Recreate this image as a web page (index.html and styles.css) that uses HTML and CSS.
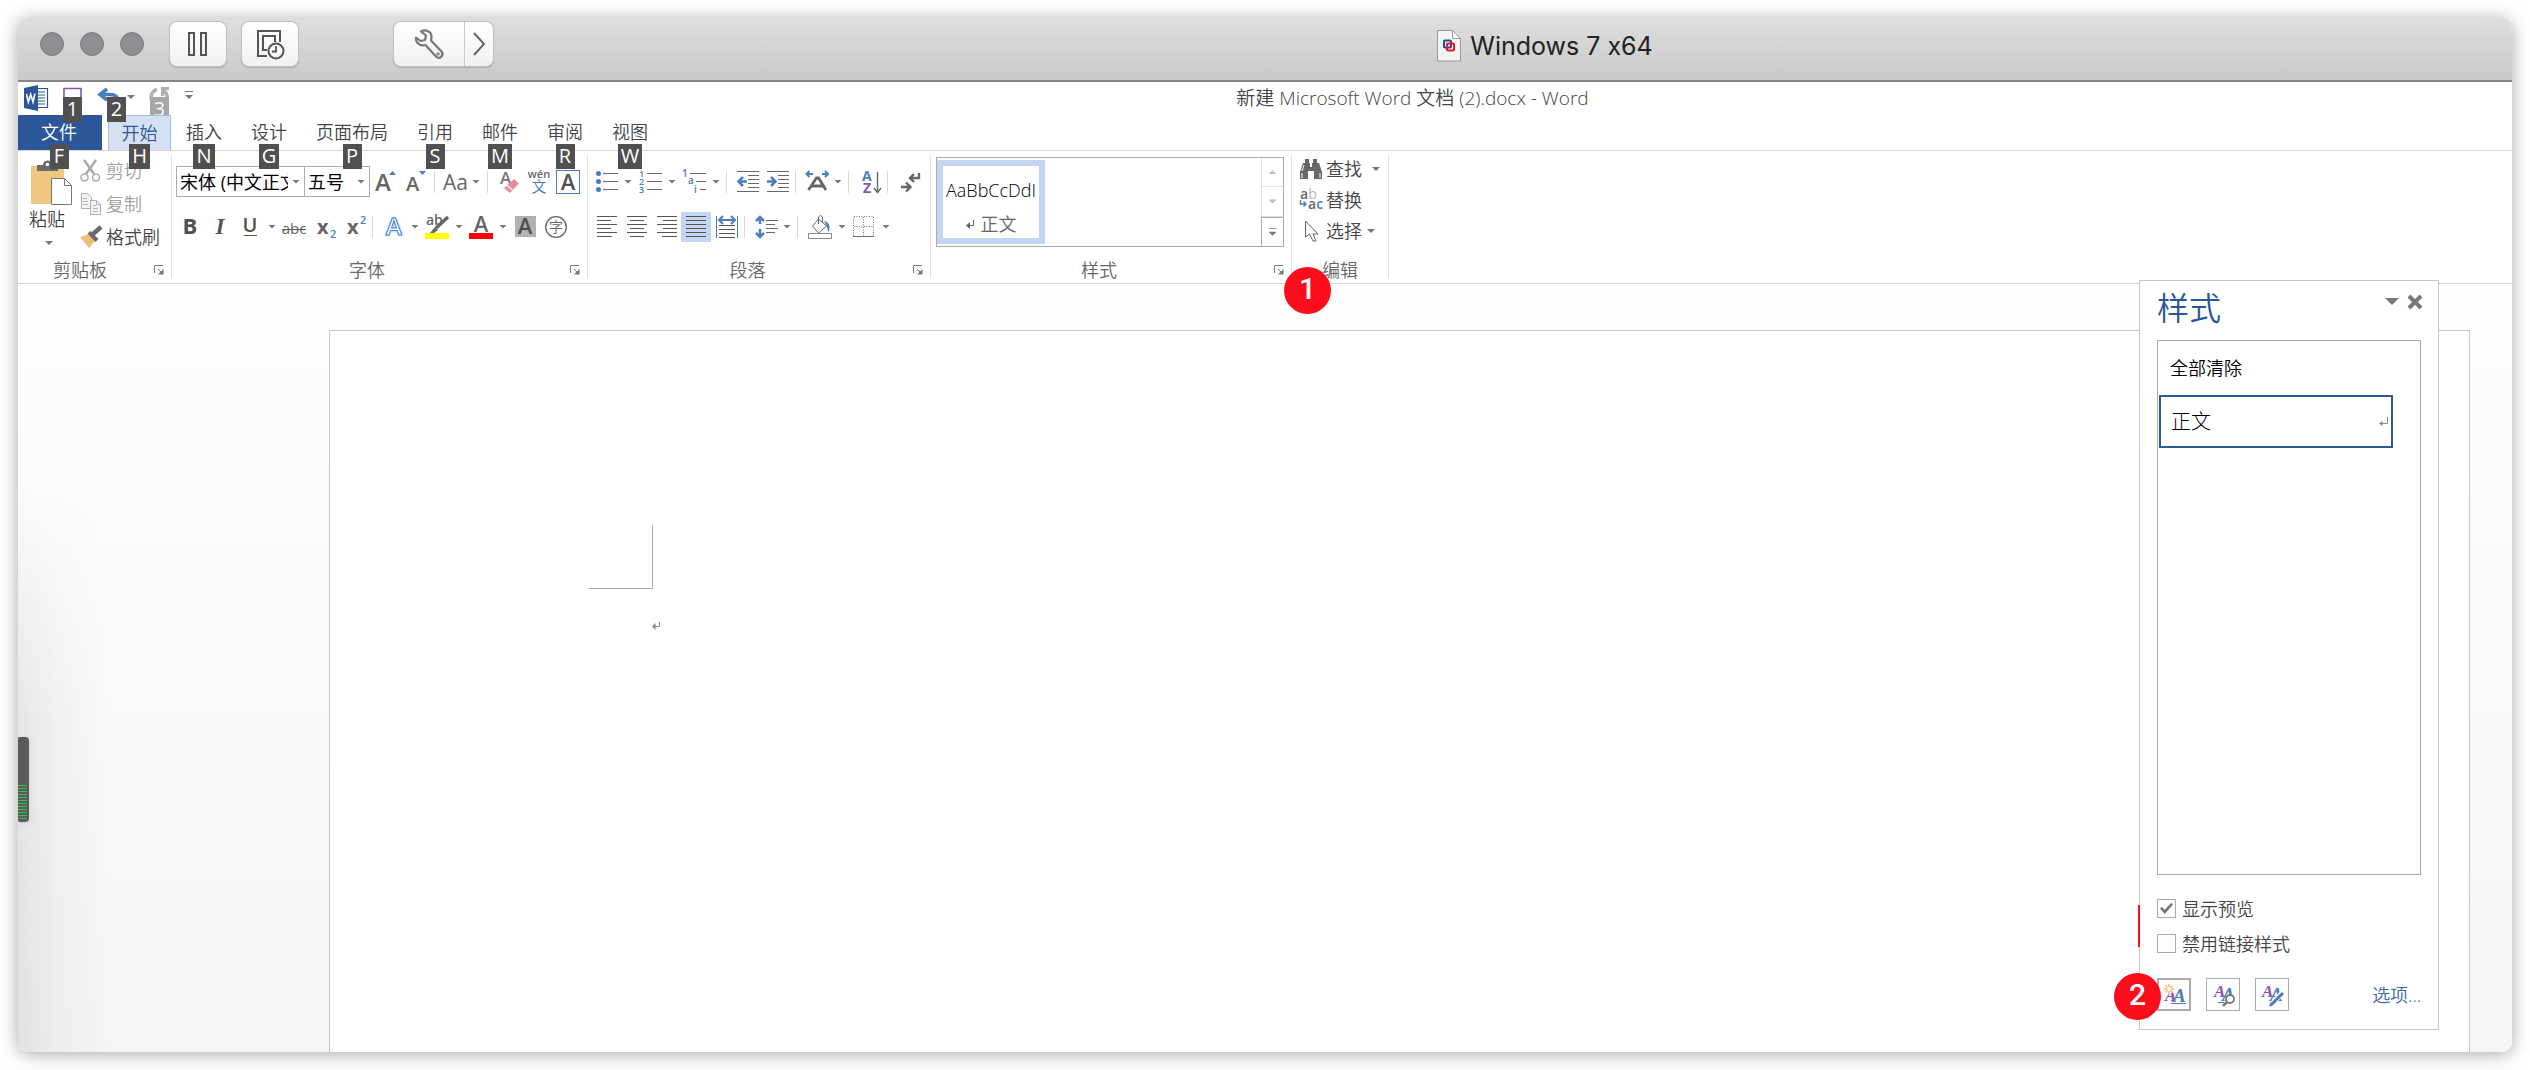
FILE: index.html
```html
<!DOCTYPE html>
<html lang="zh-CN">
<head>
<meta charset="utf-8">
<title>Windows 7 x64</title>
<link rel="stylesheet" href="styles.css">
</head>
<body>
<div class="window">
  <header class="titlebar">
    <div class="lights"><span></span><span></span><span></span></div>
    <div class="vm-tools">
      <button class="vm-btn" aria-label="暂停"><svg width="22" height="26" viewBox="0 0 22 26" fill="none" stroke="#555" stroke-width="2"><path d="M2 2h5v22H2zM14 2h5v22h-5z"/></svg></button>
      <button class="vm-btn" aria-label="快照"><svg width="32" height="32" viewBox="0 0 32 32" fill="none" stroke="#555" stroke-width="2"><path d="M13 28H4V3h22v11M13 22H9V8h12v6M9 22h4M9 8v14" /><circle cx="22" cy="23" r="7.500"/><path d="M22 18v5.500h-4" stroke-width="1.800"/></svg></button>
    </div>
    <div class="vm-split">
      <button class="vm-wrench" aria-label="设置"><svg width="32" height="32" viewBox="0 0 32 32" fill="none" stroke="#777" stroke-width="2.200" stroke-linejoin="round"><path d="M8 3.500C12 1 18 3 18.500 8c.2 2-.2 3-.5 4.500l10.500 11c3 4-2 8.500-5.500 5L12.500 17C8 18.500 2.500 15.500 3 9.500l4.500 3.500 4.500-1 1-4.500z"/><circle cx="25" cy="26" r=".6"/></svg></button>
      <button class="vm-more" aria-label="更多"><svg width="14" height="26" viewBox="0 0 14 26" fill="none" stroke="#666" stroke-width="2"><path d="M2 2l10 11L2 24"/></svg></button>
    </div>
    <div class="vm-title">
      <svg width="26" height="34" viewBox="0 0 26 34"><path d="M1.500 1.500h15l8 8v22.500h-23z" fill="#f4f4f4" stroke="#999"/><path d="M16.500 1.500v8h8z" fill="#fff" stroke="#999"/><rect x="8" y="11.500" width="7" height="7" rx="1" fill="none" stroke="#1b4f97" stroke-width="2"/><rect x="11" y="14.500" width="7" height="7" rx="1" fill="none" stroke="#f5142a" stroke-width="2"/></svg>
      <span>Windows 7 x64</span>
    </div>
  </header>

  <div class="word">
    <div class="caption">
      <div class="qat">
        <svg class="app-icon" width="24" height="26" viewBox="0 0 24 26"><path d="M13 3.500h10.500v19H13" fill="#fff" stroke="#2b579a" stroke-width="1.200"/><path d="M14 7h7M14 10h7M14 13h7M14 16h7M14 19h7" stroke="#2b579a" stroke-width="1.200"/><path d="M0 3L14 0v26L0 23z" fill="#2b579a"/><path d="M2.500 9l1.800 8 2.400-7.500L9 17l2-8.500" fill="none" stroke="#fff" stroke-width="1.600"/></svg>
        <button class="tipped" aria-label="保存"><svg width="19" height="22" viewBox="0 0 19 22"><path d="M1 1.500h17v19H1z" fill="#fff" stroke="#8454b0" stroke-width="1.600"/></svg><kbd>1</kbd></button>
        <button class="tipped undo" aria-label="撤消"><svg width="24" height="22" viewBox="0 0 24 22"><path d="M10 2L3 7.500 10 13M3 7.500h10c5 0 8 2 8 7" fill="none" stroke="#4a7ebb" stroke-width="3.500"/></svg><i class="caret"></i><kbd>2</kbd></button>
        <button class="tipped faded" aria-label="恢复"><svg width="20" height="22" viewBox="0 0 20 22"><path d="M7 2.500a8 8 0 1 0 6.500 1" fill="none" stroke="#666" stroke-width="3.500"/><path d="M11 1.500h8M12.500 1v8" stroke="#666" stroke-width="3"/></svg><kbd>3</kbd></button>
        <button class="more" aria-label="自定义"><i class="caret bar"></i></button>
      </div>
      <div class="doc-title">新建 Microsoft Word 文档 (2).docx - Word</div>
    </div>

    <nav class="tabs">
      <a class="tab file" href="#">文件<kbd>F</kbd></a>
      <a class="tab active" href="#">开始<kbd>H</kbd></a>
      <a class="tab" href="#">插入<kbd>N</kbd></a>
      <a class="tab" href="#">设计<kbd>G</kbd></a>
      <a class="tab" href="#">页面布局<kbd>P</kbd></a>
      <a class="tab" href="#">引用<kbd>S</kbd></a>
      <a class="tab" href="#">邮件<kbd>M</kbd></a>
      <a class="tab" href="#">审阅<kbd>R</kbd></a>
      <a class="tab" href="#">视图<kbd>W</kbd></a>
    </nav>

    <div class="ribbon">
      <section class="group clipboard">
        <div class="clip-body">
          <button class="paste"><svg width="44" height="46" viewBox="0 0 44 46"><path d="M1 6h33v38H1z" fill="#edc87e"/><path d="M7 5h6a4.500 4.500 0 0 1 9 0h6v6H7z" fill="#6a6a6a"/><circle cx="17.500" cy="4.500" r="1.800" fill="#fff"/><path d="M21.500 18.500h13l7 7v19h-20z" fill="#fff" stroke="#777"/><path d="M34.500 18.500v7h7" fill="none" stroke="#777"/></svg><span>粘贴</span><i class="caret"></i></button>
          <div class="clip-list">
            <button class="off"><svg width="24" height="24" viewBox="0 0 24 24" fill="none" stroke="#aaa"><path d="M5 1l10 14M17 1L7 15" stroke-width="2.500"/><circle cx="5.500" cy="18.500" r="3.500" stroke-width="1.500"/><circle cx="17" cy="18.500" r="3.500" stroke-width="1.500"/></svg>剪切</button>
            <button class="off"><svg width="24" height="24" viewBox="0 0 24 24" fill="#f6f1f6" stroke="#b5adb5"><path d="M2.500 1.500h6l4 4v11h-10z"/><path d="M11.500 8.500h6l4 4v10h-10zM17.500 8.500v4h4M4 6.500h4M4 9.500h5M4 12.500h5M14 13.500h3M14 16.500h5M14 19.500h5"/></svg>复制</button>
            <button><svg width="24" height="24" viewBox="0 0 24 24"><path d="M1 12l9-3 6 7-6 7z" fill="#edc07a"/><path d="M8.500 8.500l3-2.500 8 8-3 3z" fill="#6a6a6a"/><path d="M14 9l8-7" stroke="#6a6a6a" stroke-width="4.500"/></svg>格式刷</button>
          </div>
        </div>
        <footer><span>剪贴板</span><button class="launch" aria-label="剪贴板"><svg width="10" height="10" viewBox="0 0 10 10" fill="none" stroke="#777"><path d="M.5 8V.5H9M4 4l4 4"/><path d="M9.500 4v5.500H4z" fill="#777" stroke="none"/></svg></button></footer>
      </section>

      <section class="group font">
        <div class="row first">
          <div class="combos">
            <label class="combo name"><select aria-label="字体"><option>宋体 (中文正文)</option></select><i class="caret"></i></label>
            <label class="combo size"><select aria-label="字号"><option>五号</option></select><i class="caret"></i></label>
          </div>
          <button aria-label="增大字号"><svg width="24" height="24" viewBox="0 0 24 24"><text x="1" y="21" font-size="24" class="gl">A</text><path d="M15 5l3.500-4L22 5z" fill="#4a7ebb"/></svg></button>
          <button aria-label="减小字号"><svg width="24" height="24" viewBox="0 0 24 24"><text x="2" y="21" font-size="20" class="gl">A</text><path d="M15 1h7l-3.500 4z" fill="#4a7ebb"/></svg></button>
          <i class="sep"></i>
          <button class="case" aria-label="更改大小写">Aa<i class="caret"></i></button>
          <i class="sep"></i>
          <button aria-label="清除格式"><svg width="28" height="24" viewBox="0 0 28 24"><text x="6" y="14" font-size="17" class="gl gray">A</text><path d="M20 9l5 4.500-9 9.500-6-5z" fill="#e78a9c"/><path d="M12.500 15l6 5" stroke="#fff" stroke-width="1.200"/></svg></button>
          <button aria-label="拼音指南"><svg width="22" height="24" viewBox="0 0 22 24"><text x="11" y="8" font-size="11" text-anchor="middle" class="gl">wén</text><text x="11" y="22" font-size="15" text-anchor="middle" class="cj blue">文</text></svg></button>
          <button aria-label="字符边框"><svg width="24" height="24" viewBox="0 0 24 24"><rect x=".5" y=".5" width="23" height="23" fill="#fff" stroke="#4a7ebb"/><text x="12" y="20" font-size="22" text-anchor="middle" class="gl dark">A</text></svg></button>
        </div>
        <div class="row second">
          <button aria-label="加粗"><svg width="24" height="24" viewBox="0 0 24 24"><text x="12" y="19" font-size="22" text-anchor="middle" class="gl bold dark">B</text></svg></button>
          <button aria-label="倾斜"><svg width="24" height="24" viewBox="0 0 24 24"><text x="12" y="19" font-size="23" text-anchor="middle" class="serif">I</text></svg></button>
          <button aria-label="下划线"><svg width="24" height="24" viewBox="0 0 24 24"><text x="12" y="17" font-size="20" text-anchor="middle" class="gl dark semi">U</text><path d="M6 20.500h13" stroke="#555"/></svg></button>
          <i class="caret"></i>
          <button aria-label="删除线"><svg width="24" height="24" viewBox="0 0 24 24"><text x="12" y="19" font-size="15" text-anchor="middle" class="gl light">abc</text><path d="M0 14.500h24" stroke="#555"/></svg></button>
          <button aria-label="下标"><svg width="24" height="24" viewBox="0 0 24 24"><text x="5" y="19" font-size="20" class="gl bold">x</text><text x="18" y="23" font-size="11" class="gl blue">2</text></svg></button>
          <button aria-label="上标"><svg width="24" height="24" viewBox="0 0 24 24"><text x="5" y="19" font-size="20" class="gl bold">x</text><text x="18" y="9" font-size="11" class="gl blue">2</text></svg></button>
          <i class="sep"></i>
          <button aria-label="文本效果"><svg width="26" height="24" viewBox="0 0 26 24"><text x="15" y="20" font-size="24" text-anchor="middle" class="glow">A</text></svg></button>
          <i class="caret"></i>
          <button aria-label="突出显示"><svg width="24" height="24" viewBox="0 0 24 24"><text x="1" y="10" font-size="14" class="gl">ab</text><path d="M23 2L11 13" stroke="#666" stroke-width="3.500"/><path d="M10 12l3 3-4 3H5z" fill="#666"/><path d="M0 18h24v6H0z" fill="#ff0"/></svg></button>
          <i class="caret"></i>
          <button aria-label="字体颜色"><svg width="24" height="24" viewBox="0 0 24 24"><text x="12" y="17" font-size="22" text-anchor="middle" class="gl">A</text><path d="M0 18h24v6H0z" fill="red"/></svg></button>
          <i class="caret"></i>
          <button aria-label="字符底纹"><svg width="24" height="24" viewBox="0 0 24 24"><path d="M2 1h21v21H2z" fill="#b1b1b1"/><text x="12" y="19" font-size="22" text-anchor="middle" class="gl dark">A</text></svg></button>
          <button aria-label="带圈字符"><svg width="24" height="24" viewBox="0 0 24 24"><circle cx="13" cy="12" r="10.300" fill="none" stroke="#666" stroke-width="1.300"/><text x="13" y="17" font-size="14" text-anchor="middle" class="cj">字</text></svg></button>
        </div>
        <footer><span>字体</span><button class="launch" aria-label="字体设置"><svg width="10" height="10" viewBox="0 0 10 10" fill="none" stroke="#777"><path d="M.5 8V.5H9M4 4l4 4"/><path d="M9.500 4v5.500H4z" fill="#777" stroke="none"/></svg></button></footer>
      </section>

      <section class="group para">
        <div class="row">
          <button aria-label="项目符号"><svg width="24" height="24" viewBox="0 0 24 24"><g fill="#4a7ebb"><circle cx="4.500" cy="3.500" r="2.500"/><circle cx="4.500" cy="11.500" r="2.500"/><circle cx="4.500" cy="19.500" r="2.500"/></g><path d="M9 3.500h15M9 11.500h15M9 19.500h15" stroke="#666"/></svg></button>
          <i class="caret"></i>
          <button aria-label="编号"><svg width="24" height="24" viewBox="0 0 24 24"><g font-size="9" class="gl blue"><text x="1" y="7">1</text><text x="1" y="15">2</text><text x="1" y="23">3</text></g><path d="M9 3.500h15M9 11.500h15M9 19.500h15" stroke="#666"/></svg></button>
          <i class="caret"></i>
          <button aria-label="多级列表"><svg width="24" height="24" viewBox="0 0 24 24"><g font-size="10" class="gl blue"><text x="0" y="7">1</text><text x="6" y="14">a</text><text x="12" y="23">i</text></g><path d="M8 3.500h16M14 11.500h10M18 19.500h6" stroke="#666"/></svg></button>
          <i class="caret"></i>
          <i class="sep"></i>
          <button aria-label="减少缩进"><svg width="26" height="24" viewBox="0 0 26 24"><path d="M4 1.500h22M15 5.500h11M15 9.500h11M15 13.500h11M15 17.500h11M4 21.500h22" stroke="#666"/><path d="M14 11.500H6M10 7l-4.500 4.500L10 16" fill="none" stroke="#4a7ebb" stroke-width="2.500"/></svg></button>
          <button aria-label="增加缩进"><svg width="24" height="24" viewBox="0 0 24 24"><path d="M2 1.500h22M13 5.500h11M13 9.500h11M13 13.500h11M13 17.500h11M2 21.500h22" stroke="#666"/><path d="M2 11.500h8M6 7l4.500 4.500L6 16" fill="none" stroke="#4a7ebb" stroke-width="2.500"/></svg></button>
          <i class="sep"></i>
          <button aria-label="中文版式"><svg width="26" height="24" viewBox="0 0 26 24"><path d="M6.500 20L14.500 8h2L24 20M10 16h11" fill="none" stroke="#666" stroke-width="2.800"/><path d="M11 4H5M7.500 1L4.500 4l3 3M20 4h6M23 1l3 3-3 3" fill="none" stroke="#4a7ebb" stroke-width="2"/></svg></button>
          <i class="caret"></i>
          <i class="sep"></i>
          <button aria-label="排序"><svg width="26" height="24" viewBox="0 0 26 24"><text x="7" y="11" font-size="14" class="gl bold blue">A</text><text x="8" y="23" font-size="14" class="gl bold purple">Z</text><path d="M22.500 2v20M19 18l3.500 4.500L26 18" fill="none" stroke="#666" stroke-width="1.400"/></svg></button>
          <i class="sep"></i>
          <button aria-label="编辑标记"><svg width="26" height="24" viewBox="0 0 26 24" fill="none" stroke="#666" stroke-width="2.400"><path d="M25 3v5h-9M20 4l-4 4 4 4M7 17h9M12 12.500l4.500 4.500-4.500 4.500"/></svg></button>
        </div>
        <div class="row">
          <button aria-label="左对齐"><svg width="24" height="24" viewBox="0 0 24 24"><path d="M3 1.500h20M3 5.500h14M3 9.500h20M3 13.500h14M3 17.500h20M3 21.500h15" stroke="#555"/></svg></button>
          <button aria-label="居中"><svg width="24" height="24" viewBox="0 0 24 24"><path d="M3 1.500h20M6 5.500h14M3 9.500h20M6 13.500h14M3 17.500h20M6 21.500h14" stroke="#555"/></svg></button>
          <button aria-label="右对齐"><svg width="24" height="24" viewBox="0 0 24 24"><path d="M3 1.500h20M9 5.500h14M3 9.500h20M9 13.500h14M3 17.500h20M8 21.500h15" stroke="#555"/></svg></button>
          <button class="pressed" aria-label="两端对齐"><svg width="24" height="24" viewBox="0 0 24 24"><path d="M2 1.500h20M2 5.500h20M2 9.500h20M2 13.500h20M2 17.500h20M2 21.500h20" stroke="#555"/></svg></button>
          <button aria-label="分散对齐"><svg width="24" height="24" viewBox="0 0 24 24"><path d="M2.500 1v22M23.500 1v22" stroke="#4a7ebb"/><path d="M5 10.500h16M5 14.500h16M5 18.500h16M5 22.500h16" stroke="#555"/><path d="M5 5h16M9 1L5 5l4 4M17 1l4 4-4 4" fill="none" stroke="#4a7ebb" stroke-width="2"/></svg></button>
          <i class="sep"></i>
          <button aria-label="行距"><svg width="26" height="24" viewBox="0 0 26 24"><path d="M9 2v7M9 14v8M5 6l4-4 4 4M5 18l4 4 4-4" fill="none" stroke="#4a7ebb" stroke-width="2.500"/><path d="M15 5.500h12M15 9.500h9M15 13.500h12M15 17.500h9" stroke="#666"/></svg></button>
          <i class="caret"></i>
          <i class="sep"></i>
          <button aria-label="底纹"><svg width="28" height="24" viewBox="0 0 28 24"><path d="M14.500 4l8 7-8 7-6-7zM14.500 9V2q2-3 4 0v6" fill="#fff" stroke="#666"/><path d="M20 6c5 1 7 6 4.500 11-1-2-1-5-4.500-11z" fill="#4a7ebb"/><path d="M4.500 18.500h23v5h-23z" fill="#fff" stroke="#888"/></svg></button>
          <i class="caret"></i>
          <button aria-label="边框"><svg width="24" height="24" viewBox="0 0 24 24" fill="none" stroke="#777"><path d="M1.500 21V1.500h20V21M11.500 2v19M2 11.500h20" stroke-dasharray="1 1.500"/><path d="M1 21.500h21"/></svg></button>
          <i class="caret"></i>
        </div>
        <footer><span>段落</span><button class="launch" aria-label="段落设置"><svg width="10" height="10" viewBox="0 0 10 10" fill="none" stroke="#777"><path d="M.5 8V.5H9M4 4l4 4"/><path d="M9.500 4v5.500H4z" fill="#777" stroke="none"/></svg></button></footer>
      </section>

      <section class="group styles">
        <div class="gallery">
          <button class="style-item"><span class="sample">AaBbCcDdI</span><span class="style-name"><svg width="9" height="9" viewBox="0 0 9 9"><path d="M7.500 0v5.500H2" fill="none" stroke="#666"/><path d="M0 5.500L4 2v7z" fill="#666"/></svg>正文</span></button>
          <div class="spin">
            <button class="weak" aria-label="上一行"><i class="caret up"></i></button>
            <button class="weak" aria-label="下一行"><i class="caret"></i></button>
            <button class="expand" aria-label="其他"><i class="caret bar"></i></button>
          </div>
        </div>
        <footer><span>样式</span><button class="launch" aria-label="样式窗格"><svg width="10" height="10" viewBox="0 0 10 10" fill="none" stroke="#777"><path d="M.5 8V.5H9M4 4l4 4"/><path d="M9.500 4v5.500H4z" fill="#777" stroke="none"/></svg></button></footer>
        <b class="badge step1">1</b>
      </section>

      <section class="group edit">
        <div class="edit-list">
          <button><svg width="24" height="22" viewBox="0 0 24 22" fill="#666"><path d="M6 1h4v4H6zM14 1h4v4h-4zM4 5h7v4h2V5h7l3 9v7h-8v-8h-6v8H1v-7z"/><path d="M3 15v5M5 7l-2 6M21 15v5" stroke="#fff"/></svg>查找<i class="caret"></i></button>
          <button><svg width="24" height="22" viewBox="0 0 24 22"><text x="1" y="10" font-size="14" class="gl">a<tspan class="pale">b</tspan></text><text x="9" y="20" font-size="14" class="gl semi">a<tspan class="blue">c</tspan></text><path d="M1.500 11v4h5M4.500 12.500L7 15l-2.500 2.500" fill="none" stroke="#4a7ebb" stroke-width="1.500"/></svg>替换</button>
          <button><svg width="24" height="22" viewBox="0 0 24 22"><path d="M6.500 1v16l4-3 3.500 7h3l-3-7h5z" fill="#fff" stroke="#666"/></svg>选择<i class="caret near"></i></button>
        </div>
        <footer><span>编辑</span></footer>
      </section>
    </div>

    <main class="workspace">
      <span class="meter"></span>
      <article class="page">
        <div class="margin-mark"></div>
        <svg class="para-mark" width="8" height="8" viewBox="0 0 8 8"><path d="M7.500 0v4.500H2" fill="none" stroke="#888"/><path d="M0 4.500L3.500 1v7z" fill="#888"/></svg>
      </article>
    </main>

    <aside class="pane">
      <div class="pane-head">
        <h2>样式</h2>
        <button aria-label="窗格选项"><svg width="14" height="8" viewBox="0 0 14 8"><path d="M0 0h14L7 7z" fill="#777"/></svg></button>
        <button aria-label="关闭"><svg width="16" height="16" viewBox="0 0 16 16"><path d="M2 2l12 12M14 2L2 14" stroke="#777" stroke-width="4"/></svg></button>
      </div>
      <ul class="style-list">
        <li>全部清除</li>
        <li class="selected">正文<svg width="10" height="10" viewBox="0 0 10 10"><path d="M8.500 0v6.500H2" fill="none" stroke="#888"/><path d="M0 6.500L3.500 4v5z" fill="#888"/></svg></li>
      </ul>
      <label class="check"><input type="checkbox" checked>显示预览</label>
      <label class="check"><input type="checkbox">禁用链接样式</label>
      <div class="pane-foot">
        <button class="sq focus" aria-label="新建样式"><svg width="26" height="24" viewBox="0 0 26 24"><text x="4" y="18" font-size="17" class="script purple">A</text><text x="12" y="19" font-size="19" class="script blue">A</text><path d="M10 20.500h15" stroke="#4a7ebb"/><circle cx="8" cy="6" r="5" fill="#fff"/><path d="M8 1v10M3 6h10M4.500 2.500l7 7M11.500 2.500l-7 7" stroke="#eab765" stroke-width="1.300"/><circle cx="8" cy="6" r="2" fill="#fff"/></svg></button>
        <button class="sq" aria-label="样式检查器"><svg width="26" height="24" viewBox="0 0 26 24"><text x="4" y="14" font-size="17" class="script purple">A</text><text x="12" y="18" font-size="19" class="script blue">A</text><path d="M8 19.500h6" stroke="#4a7ebb"/><circle cx="20" cy="16" r="4" fill="#fff" stroke="#777" stroke-width="1.800"/><path d="M17 19l-4 4" stroke="#777" stroke-width="2.500"/></svg></button>
        <button class="sq" aria-label="管理样式"><svg width="26" height="24" viewBox="0 0 26 24"><text x="3" y="14" font-size="17" class="script purple">A</text><text x="11" y="18" font-size="19" class="script blue">A</text><path d="M24 9L13 21" stroke="#fff" stroke-width="5"/><path d="M24 10L13 21" stroke="#4a7ebb" stroke-width="3"/><path d="M10 24l1.500-5 3 3z" fill="#4a7ebb"/></svg></button>
        <a href="#">选项...</a>
      </div>
      <i class="redline"></i>
      <b class="badge step2">2</b>
    </aside>
  </div>
</div>
</body>
</html>
```
FILE: styles.css
```css
* { box-sizing: border-box; }

body {
  margin: 0;
  padding: 18px;
  height: 100vh;
  background: #fff;
  color: #444;
  font: 350 18px/24px "Open Sans", "Noto Sans CJK SC", sans-serif;
}

button {
  display: flex;
  align-items: center;
  padding: 0;
  border: 0;
  background: none;
  color: inherit;
  font: inherit;
}

svg { display: block; flex: none; overflow: visible; }
a { color: inherit; text-decoration: none; }

.window {
  display: flex;
  flex-direction: column;
  height: 100%;
  border-radius: 10px;
  box-shadow: 0 2px 18px rgba(0, 0, 0, .35);
}

/* Virtual machine title bar */
.titlebar {
  display: flex;
  align-items: center;
  height: 64px;
  flex: none;
  padding: 0 22px 10px;
  border-bottom: 2px solid #858585;
  border-radius: 10px 10px 0 0;
  background: linear-gradient(#dedede, #c9c9c9);
}
.lights { display: flex; gap: 16px; }
.lights span {
  width: 24px;
  height: 24px;
  border: 1px solid #7b7a80;
  border-radius: 50%;
  background: #8f8e93;
}
.vm-tools { display: flex; gap: 16px; margin-left: 26px; }
.vm-btn, .vm-split {
  height: 44px;
  border-radius: 7px;
  background: linear-gradient(#fff, #f1f1f1);
  box-shadow: 0 0 0 1px #c2c2c2, 0 1px 1px 1px #aaa;
}
.vm-btn { width: 56px; justify-content: center; }
.vm-split { display: flex; margin-left: 96px; }
.vm-split button { justify-content: center; }
.vm-wrench { width: 71px; border-right: 1px solid #ccc; }
.vm-more { width: 28px; }
.vm-title {
  display: flex;
  flex: 1;
  justify-content: center;
  align-items: center;
  gap: 8px;
  padding-top: 4px;
  margin-left: 106px;
  color: #222;
  font: 25px/30px Inter, sans-serif;
  font-feature-settings: "calt" 0;
}

/* Word frame */
.word {
  position: relative;
  display: flex;
  flex: 1;
  flex-direction: column;
  min-height: 0;
}
.caption { display: flex; height: 33px; background: #fff; }
.qat { display: flex; gap: 15px; padding: 3px 0 0 6px; }
.tipped { position: relative; align-items: flex-start; height: 24px; padding-top: 2px; }
.tipped .caret { margin: 8px 0 0 6px; }
.undo kbd { left: 10px; }
.undo { width: 38px; }
.faded { opacity: .5; }
.more { height: 20px; }
kbd {
  position: absolute;
  top: 12px;
  z-index: 2;
  min-width: 19px;
  height: 25px;
  padding: 0 3px;
  background: #505050;
  color: #fff;
  font: 20px/24px "Open Sans", sans-serif;
  text-align: center;
}
.doc-title {
  flex: 1;
  margin-left: 120px;
  font-size: 19px;
  line-height: 32px;
  text-align: center;
}

.caret {
  flex: none;
  width: 8px;
  height: 4px;
  background: #777;
  clip-path: polygon(0 0, 100% 0, 50% 100%);
}
.caret.up { clip-path: polygon(50% 0, 100% 100%, 0 100%); }
.caret.bar {
  height: 8px;
  clip-path: polygon(0 0, 100% 0, 100% 1px, 0 1px, 0 4px, 100% 4px, 50% 100%, 0 4px);
}

.tabs {
  display: flex;
  height: 36px;
  border-bottom: 1px solid #d4d4d4;
  background: #fff;
}
.tab {
  position: relative;
  display: flex;
  justify-content: center;
  padding: 0 14px;
  margin-right: 1px;
  line-height: 34px;
}
.tab kbd { top: 29px; align-self: center; }
.tab.file { width: 84px; margin-right: 6px; padding: 0 2px 0 0; background: #2b579a; color: #fff; }
.tab.active {
  width: 63px;
  padding: 0;
  border: 1px solid #a3bde3;
  border-bottom: 0;
  background: #d5e1f2;
  color: #2b579a;
}
.tab.active kbd { top: 28px; }

/* Ribbon */
.ribbon {
  display: flex;
  padding: 4px 0 5px;
  border-bottom: 1px solid #d4d4d4;
  background: #fff;
}
.group {
  position: relative;
  display: flex;
  flex-direction: column;
  height: 123px;
  border-right: 1px solid #e1e1e1;
}
.group footer {
  display: flex;
  align-items: center;
  height: 16px;
  margin-top: auto;
  color: #666;
}
.group footer span { flex: 1; padding-right: 12px; text-align: center; line-height: 16px; }
.launch { width: 16px; margin-right: 1px; }

.clipboard { width: 154px; }
.clip-body { display: flex; }
.paste { flex-direction: column; width: 58px; padding: 5px 0 0 10px; }
.paste span { margin-left: -10px; line-height: 26px; }
.paste .caret { margin: 9px 0 0 -6px; }
.clip-list { display: flex; flex-direction: column; gap: 9px; padding: 4px 0 0 3px; }
.clip-list button { gap: 3px; height: 24px; }
.off { color: #a0a0a0; }

.row { display: flex; align-items: center; gap: 6px; height: 31px; }
.row + .row { margin-top: 14px; }
.sep { width: 1px; height: 22px; background: #dadada; }
.font { width: 416px; padding: 11px 0 0 4px; }
.font .second { padding-left: 2px; }
.combos { display: flex; margin-right: -2px; }
.combo { display: grid; align-items: center; height: 31px; border: 1px solid #ababab; }
.combo > * { grid-area: 1 / 1; }
.combo .caret { justify-self: end; margin-right: 4px; }
.combo select {
  appearance: none;
  width: 100%;
  height: 29px;
  padding: 0 16px 0 3px;
  border: 0;
  border-radius: 0;
  background: none;
  color: #000;
  font: inherit;
  font-weight: 400;
}
.combo.name { width: 129px; margin-right: -1px; }
.combo.size { width: 66px; }
.case { gap: 4px; width: 40px; padding-left: 2px; color: #666; font-size: 21px; font-weight: 400; }

.para { width: 343px; padding: 11px 0 0 6px; }
.pressed { background: #c2d5f2; box-shadow: 0 0 0 3px #c2d5f2; }

.gl { fill: #666; font-family: "Open Sans", sans-serif; font-weight: 600; }
.light { font-weight: 400; }
.dark { fill: #505050; }
.gray { fill: #777; }
.semi { font-weight: 600; }
.bold { font-weight: 700; }
.pale { fill: #b5b5b5; font-weight: 400; }
.cj { fill: #666; font-family: "Noto Sans CJK SC", sans-serif; }
.blue { fill: #4a7ebb; }
.purple { fill: #8454b0; }
.serif { fill: #555; font-family: "Liberation Serif", serif; font-style: italic; font-weight: 700; }
.script { font-family: "Liberation Serif", serif; font-style: italic; font-weight: 700; }
.glow {
  fill: #fff;
  stroke: #4a86cf;
  font-family: "Open Sans", sans-serif;
  font-weight: 600;
  filter: drop-shadow(0 0 1px #7fb0ee);
}

.styles { width: 361px; padding: 2px 7px 0 5px; }
.gallery { display: flex; justify-content: space-between; height: 90px; border: 1px solid #ababab; }
.style-item {
  flex-direction: column;
  align-items: stretch;
  width: 108px;
  height: 84px;
  margin-top: 2px;
  border: 6px solid #c2d5f2;
}
.sample {
  overflow: hidden;
  margin: 11px 2px 0 3px;
  color: #000;
  line-height: 26px;
  text-align: left;
}
.style-name { display: flex; justify-content: center; align-items: center; gap: 6px; margin-top: 10px; color: #666; line-height: 22px; }
.spin { display: flex; flex-direction: column; width: 22px; }
.spin button { flex: 1; justify-content: center; border: 0 solid #e1e1e1; border-width: 0 0 1px 1px; }
.spin .weak .caret { background: #bbb; }
.spin .expand { margin-bottom: -1px; border: 1px solid #ababab; border-width: 1px 0 1px 1px; }
.styles .launch { margin-right: -6px; }

.edit { width: 97px; }
.edit-list { display: flex; flex-direction: column; gap: 7px; padding: 2px 0 0 7px; }
.edit-list button { gap: 3px; height: 24px; }
.edit-list .caret { margin-left: 7px; }
.edit-list .near { margin-left: 2px; }
.edit footer span { padding: 0; }

.badge {
  position: absolute;
  z-index: 3;
  width: 47px;
  height: 47px;
  border-radius: 50%;
  background: #fc0d1b;
  color: #fff;
  font: 500 30px/44px Roboto, sans-serif;
  text-align: center;
}
.step1 { right: -40px; bottom: -36px; }
.step2 { left: -26px; bottom: 9px; }

/* Document area */
.workspace {
  position: relative;
  flex: 1;
  overflow: hidden;
  min-height: 0;
  padding: 46px 42px 0 311px;
  border-radius: 0 0 10px 10px;
  background: linear-gradient(#fefefe, #f5f5f5);
}
.workspace::before {
  content: "";
  position: absolute;
  inset: 200px auto 0 0;
  width: 90px;
  background: linear-gradient(90deg, rgba(0, 0, 0, .08), rgba(0, 0, 0, .03) 45%, transparent);
  mask-image: linear-gradient(transparent, #000 240px);
}
.meter {
  position: absolute;
  top: 453px;
  left: 0;
  width: 11px;
  height: 85px;
  border-radius: 2px 4px 4px 2px;
  background: repeating-linear-gradient(#32c05c 0 1px, #5b5b5b 1px 3px) 0 48px / 9px 34px no-repeat #5b5b5b;
  box-shadow: 0 1px 4px #ccc;
}
.page {
  height: 100%;
  padding: 194px 0 0 259px;
  border: 1px solid #c6c6c6;
  border-bottom: 0;
  background: #fff;
}
.margin-mark { width: 64px; height: 64px; border: solid #ababab; border-width: 0 1px 1px 0; }
.para-mark { margin: 33px 0 0 63px; }

/* Styles task pane */
.pane {
  position: absolute;
  top: 198px;
  right: 73px;
  bottom: 22px;
  display: flex;
  flex-direction: column;
  width: 300px;
  padding: 12px 17px 18px;
  border: 1px solid #c6c6c6;
  background: #fff;
}
.pane-head { display: flex; align-items: flex-start; gap: 10px; height: 30px; }
.pane-head h2 { flex: 1; margin: 0; color: #2b579a; font-size: 32px; font-weight: 350; line-height: 30px; }
.pane-head button { height: 18px; margin-right: -2px; }
.style-list {
  flex: 1;
  margin: 17px 0 16px;
  padding: 1px;
  border: 1px solid #ababab;
  list-style: none;
  color: #000;
}
.style-list li { padding: 0 11px; line-height: 53px; }
.style-list .selected {
  display: flex;
  justify-content: space-between;
  align-items: center;
  width: 234px;
  height: 53px;
  padding: 0 2px 0 10px;
  border: 2px solid #2b579a;
  font-size: 20px;
  font-weight: 300;
}
.check { display: flex; align-items: center; gap: 6px; height: 35px; }
.check input {
  appearance: none;
  display: grid;
  place-items: center;
  width: 19px;
  height: 19px;
  margin: 0;
  border: 1px solid #ababab;
  background: #fdfdfd;
}
.check input:checked::before {
  content: "";
  width: 13px;
  height: 11px;
  background: #777;
  clip-path: polygon(0 50%, 15% 36%, 36% 62%, 85% 0, 100% 14%, 37% 100%);
}
.pane-foot { display: flex; gap: 15px; align-items: center; margin-top: 17px; }
.sq { justify-content: center; width: 34px; height: 33px; border: 1px solid #ababab; background: #fdfdfd; }
.sq.focus { border-width: 2px; }
.pane-foot a { margin-left: auto; color: #3a69a8; }
.redline { position: absolute; left: -2px; bottom: 82px; width: 2px; height: 42px; background: #fc0d1b; }
```
